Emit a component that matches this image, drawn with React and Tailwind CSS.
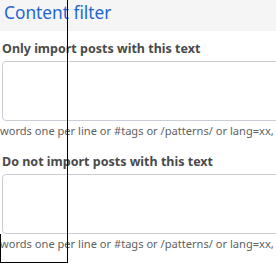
import React from 'react';

const Field = ({ label }) => (
  <div className="flex flex-col">
    <label className="pl-[2px] text-[12.5px] leading-[16px] font-bold text-[#4a4a4a] whitespace-nowrap">{label}</label>
    <textarea className="mt-[4px] ml-[2px] w-[320px] h-[60px] shrink-0 border border-[#c9ced6] rounded-[4px] bg-white resize-none" />
    <p className="mt-[2px] text-[11.1px] leading-[16px] text-[#5f5f5f] whitespace-nowrap">
      words one per line or #tags or /patterns/ or lang=xx,
    </p>
  </div>
);

export default function App() {
  return (
    <div className="relative w-[276px] h-[271px] overflow-hidden bg-white font-['Noto_Sans',sans-serif]">
      <div className="h-[31px] bg-[#f5f5f5] px-[4px]">
        <h2 className="text-[17.3px] leading-[26px] text-[#1f66d1]">Content filter</h2>
      </div>
      <div className="pt-[10px] flex flex-col gap-[15px]">
        <Field label="Only import posts with this text" />
        <Field label="Do not import posts with this text" />
      </div>
      <div className="absolute left-0 top-0 w-[68px] h-[263px] border-r border-b border-black pointer-events-none" />
      <div className="absolute left-0 top-[234px] h-[29px] border-l border-black pointer-events-none" />
    </div>
  );
}
